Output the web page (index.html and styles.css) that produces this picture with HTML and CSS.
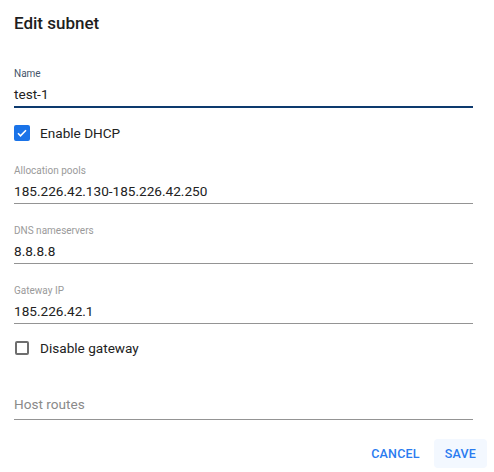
FILE: index.html
```html
<!DOCTYPE html>
<html>
<head>
<meta charset="utf-8">
<link rel="stylesheet" href="styles.css">
</head>
<body>
<div class="dialog">
  <h1 class="title">Edit subnet</h1>
  <div class="field field-focused">
    <div class="label label-focused">Name</div>
    <div class="value">test-1</div>
  </div>
  <label class="check">
    <span class="box box-checked">
      <svg width="12" height="12" viewBox="0 0 24 24"><path d="M4 12.5l5 5L20 6.5" fill="none" stroke="#fff" stroke-width="3.2"/></svg>
    </span>
    <span class="check-text">Enable DHCP</span>
  </label>
  <div class="field">
    <div class="label">Allocation pools</div>
    <div class="value">185.226.42.130-185.226.42.250</div>
  </div>
  <div class="field">
    <div class="label">DNS nameservers</div>
    <div class="value">8.8.8.8</div>
  </div>
  <div class="field">
    <div class="label">Gateway IP</div>
    <div class="value">185.226.42.1</div>
  </div>
  <label class="check check-2">
    <span class="box"></span>
    <span class="check-text">Disable gateway</span>
  </label>
  <div class="field field-empty">
    <div class="placeholder">Host routes</div>
  </div>
  <div class="actions">
    <button class="btn">CANCEL</button>
    <button class="btn btn-save">SAVE</button>
  </div>
</div>
</body>
</html>
```

FILE: styles.css
```css
html, body {
  margin: 0;
  padding: 0;
  background: #fff;
}
body {
  font-family: Roboto, "Liberation Sans", sans-serif;
  color: #212121;
}
.dialog {
  width: 494px;
  padding: 0 21px 0 14px;
  box-sizing: border-box;
}
.title {
  margin: 0;
  padding-top: 12px;
  font-size: 17px;
  font-weight: 500;
  line-height: 22px;
  color: #1e1e1e;
  height: 55px;
}
.field {
  border-bottom: 1px solid #949494;
  height: 39px;
  display: flex;
  flex-direction: column;
}
.field-focused {
  border-bottom: 2px solid #0d3a6e;
  height: 39px;
}
.label {
  font-size: 10px;
  line-height: 12px;
  color: #9a9a9a;
  height: 14px;
  margin-top: 1px;
}
.label-focused {
  color: #45556a;
}
.value {
  font-size: 13.6px;
  line-height: 20px;
  color: #222;
  margin-top: 2px;
}
.check {
  display: flex;
  align-items: center;
  height: 16px;
  margin: 17px 0 23px 0;
  font-size: 13.6px;
}
.check-2 {
  margin: 16px 0 0 0;
}
.box {
  width: 14px;
  height: 14px;
  border: 2px solid #6e6e6e;
  border-radius: 2px;
  box-sizing: border-box;
  display: flex;
  align-items: center;
  justify-content: center;
  margin-right: 11px;
  margin-left: 1px;
}
.box-checked {
  background: #1a73e8;
  border-color: #1a73e8;
  width: 16px;
  height: 16px;
  margin-left: 0;
  margin-right: 10px;
}
.check-text {
  color: #222;
  line-height: 16px;
}
.field + .field {
  margin-top: 20px;
}
.field-empty {
  margin-top: 36px;
  height: 27px;
  justify-content: flex-end;
}
.placeholder {
  font-size: 13.6px;
  line-height: 20px;
  color: #8a8a8a;
  padding-bottom: 5px;
}
.actions {
  display: flex;
  justify-content: flex-end;
  gap: 14px;
  margin: 19px -14px 0 0;
}
.btn {
  font-family: Roboto, "Liberation Sans", sans-serif;
  font-size: 12.5px;
  font-weight: 500;
  color: #2a7bf0;
  background: transparent;
  border: none;
  border-radius: 4px;
  height: 29px;
  padding: 0 11px;
  letter-spacing: 0.2px;
}
.btn:first-child {
  padding: 0;
}
.btn-save {
  background: #f3f8ff;
  min-width: 53px;
}
```
